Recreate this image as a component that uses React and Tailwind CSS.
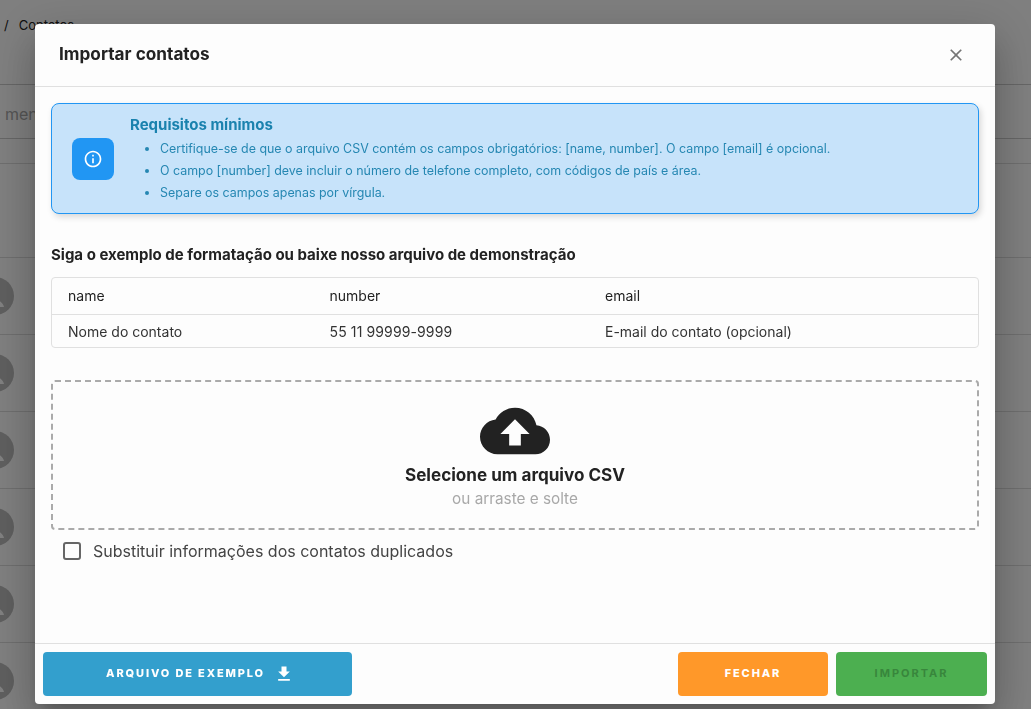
const rows = [0, 1, 2, 3, 4, 5];

const requisitos = [
  "Certifique-se de que o arquivo CSV contém os campos obrigatórios: [name, number]. O campo [email] é opcional.",
  "O campo [number] deve incluir o número de telefone completo, com códigos de país e área.",
  "Separe os campos apenas por vírgula.",
];

const Background = () => (
  <div className="h-[709px] overflow-hidden bg-white text-[#222]">
    <div className="h-[85px] border-b border-[#ccc] pt-[16px] pl-[4px] text-[13px]">
      <span className="mr-[10px]">/</span>
      <span>Contatos</span>
    </div>
    <div className="h-[54px] border-b border-[#ccc] pt-[17px] pl-[5px] text-[16px] text-[#aaa]">mensagem</div>
    <div className="h-[25px] border-b border-[#ddd]"></div>
    <div className="h-[94px] border-b border-[#ddd]"></div>
    {rows.map((row) => (
      <div key={row} className="flex h-[77px] items-center border-b border-[#ddd]">
        <svg viewBox="0 0 38 38" className="ml-[-24px] h-[38px] w-[38px] shrink-0">
          <circle cx="19" cy="19" r="19" fill="#bdbdbd" />
          <path d="M10 30C11 26 15 22.5 19 22.5C23 22.5 27 26 28 30Z" fill="#fff" />
        </svg>
      </div>
    ))}
  </div>
);

const App = () => {
  return (
    <div className="relative h-[709px] overflow-hidden font-['Inter',sans-serif]">
      <Background />
      <div className="fixed inset-0 flex justify-center bg-black/50">
        <div className="mt-[24px] mr-[1px] flex h-[680px] w-[960px] flex-col rounded-[4px] bg-[#fdfdfd] text-[#222] shadow-[0_11px_15px_-7px_rgba(0,0,0,0.2),0_24px_38px_3px_rgba(0,0,0,0.14),0_9px_46px_8px_rgba(0,0,0,0.12)]">
          {/* Header */}
          <div className="flex h-[63px] shrink-0 items-center justify-between border-b border-[#e0e0e0] pl-[24px] pr-[29px]">
            <h2 className="mb-[2px] text-[17.2px] font-[650]">Importar contatos</h2>
            <svg viewBox="0 0 24 24" className="h-[20px] w-[20px] fill-[#757575]">
              <path d="M19 6.41 17.59 5 12 10.59 6.41 5 5 6.41 10.59 12 5 17.59 6.41 19 12 13.41 17.59 19 19 17.59 13.41 12z" />
            </svg>
          </div>

          {/* Body */}
          <div className="flex-1 px-[16px] pt-[16px]">
            <div className="flex h-[111px] items-center rounded-[8px] border border-[#2196f3] bg-[#c7e3fa] pl-[20px] shadow-[2px_3px_6px_rgba(0,0,0,0.15)]">
              <div className="flex h-[42px] w-[42px] shrink-0 items-center justify-center rounded-[8px] bg-[#2196f3]">
                <svg viewBox="0 0 24 24" className="h-[20px] w-[20px] fill-white">
                  <path d="M11 7h2v2h-2zm0 4h2v6h-2zm1-9C6.48 2 2 6.48 2 12s4.48 10 10 10 10-4.48 10-10S17.52 2 12 2zm0 18c-4.41 0-8-3.59-8-8s3.59-8 8-8 8 3.59 8 8-3.59 8-8 8z" />
                </svg>
              </div>
              <div className="mt-[2px] ml-[16px] text-[#1a82ae]">
                <div className="text-[15px] leading-[20px] font-[650]">Requisitos mínimos</div>
                <ul className="mt-[3px] list-disc pl-[30px] text-[12.43px] leading-[22px] text-[#2587b2]">
                  {requisitos.map((item) => (
                    <li key={item}>{item}</li>
                  ))}
                </ul>
              </div>
            </div>

            <h3 className="mt-[31px] text-[15px] leading-[20px] font-[650]">
              Siga o exemplo de formatação ou baixe nosso arquivo de demonstração
            </h3>

            <div className="mt-[12px] rounded-[4px] border border-[#e0e0e0] text-[14px]">
              <div className="grid h-[37px] grid-cols-[261.5px_275.5px_1fr] items-center border-b border-[#e0e0e0] pb-[1px] pl-[16px]">
                <span>name</span>
                <span>number</span>
                <span>email</span>
              </div>
              <div className="grid h-[32px] grid-cols-[261.5px_275.5px_1fr] items-center pl-[16px] text-[#333]">
                <span>Nome do contato</span>
                <span className="tracking-[0.12px]">55 11 99999-9999</span>
                <span>E-mail do contato (opcional)</span>
              </div>
            </div>

            <div className="mt-[32px] flex h-[150px] flex-col items-center rounded-[4px] border-2 border-dashed border-[#aaaaaa]">
              <svg viewBox="0 0 24 24" className="mt-[14px] h-[70px] w-[70px] fill-[#222]">
                <path d="M19.35 10.04C18.67 6.59 15.64 4 12 4 9.11 4 6.6 5.64 5.35 8.04 2.34 8.36 0 10.91 0 14c0 3.31 2.69 6 6 6h13c2.76 0 5-2.24 5-5 0-2.64-2.05-4.78-4.65-4.96zM14 13v4h-4v-4H7l5-5 5 5h-3z" />
              </svg>
              <div className="mt-[-3px] text-[17.1px] leading-[24px] font-[650]">Selecione um arquivo CSV</div>
              <div className="mt-[2px] text-[15.3px] leading-[20px] text-[#a8a8a8]">ou arraste e solte</div>
            </div>

            <label className="mt-[11px] ml-[12px] flex items-center gap-[12px]">
              <span className="h-[18px] w-[18px] rounded-[3px] border-2 border-[#666]"></span>
              <span className="text-[16px] leading-[20px] text-[#444]">Substituir informações dos contatos duplicados</span>
            </label>
          </div>

          {/* Footer */}
          <div className="flex h-[61px] shrink-0 items-center justify-between border-t border-[#e0e0e0] px-[8px]">
            <button className="flex h-[44px] w-[309px] items-center justify-center gap-[9px] rounded-[4px] bg-[#339fcd] pb-[1px] pl-[5px] text-[11px] font-extrabold tracking-[0.17em] text-white">
              ARQUIVO DE EXEMPLO
              <svg viewBox="0 0 24 24" className="h-[20px] w-[20px] fill-white">
                <path d="M5 20h14v-2H5v2zM19 9h-4V3H9v6H5l7 7 7-7z" />
              </svg>
            </button>
            <div className="flex gap-[8px]">
              <button className="h-[44px] w-[150px] rounded-[4px] bg-[#ff9829] pb-[1px] text-[11px] font-extrabold tracking-[0.17em] text-white">
                FECHAR
              </button>
              <button className="h-[44px] w-[151px] rounded-[4px] bg-[#4caf50] pb-[1px] text-[11px] font-bold tracking-[0.18em] text-[#38863c]">
                IMPORTAR
              </button>
            </div>
          </div>
        </div>
      </div>
    </div>
  );
};

export default App;
